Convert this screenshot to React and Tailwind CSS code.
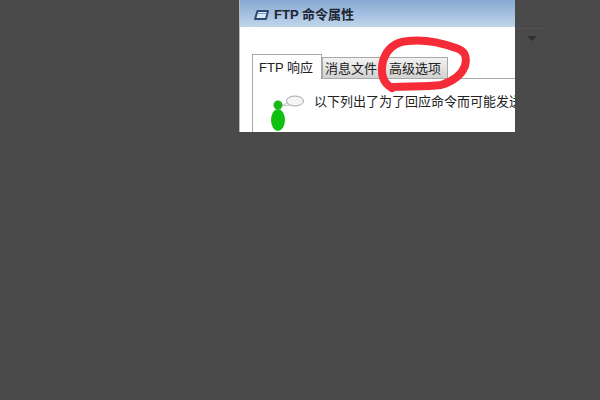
import React from "react";

const cjk = "font-['Liberation_Sans','Noto_Sans_CJK_SC',sans-serif]";

const Tab = ({ label, active, className = "" }) => (
  <div
    className={`flex items-center justify-center border border-[#a8a8a8] pr-[2px] text-[13px] leading-none text-[#222] ${
      active
        ? "z-10 -mb-px h-[25px] border-b-0 bg-white"
        : "h-[21px] border-b-0 bg-gradient-to-b from-[#f2f2f2] to-[#d2d2d2]"
    } ${className}`}
  >
    {label}
  </div>
);

const App = () => {
  return (
    <div className={`relative h-[400px] w-[600px] overflow-hidden bg-[#4a4a4a] ${cjk}`}>
      <div className="ml-[239px] flex h-[132px] w-[276px] flex-col overflow-hidden border-l border-[#b8b8b8] bg-white">
        {/* title bar */}
        <div className="flex h-[27px] shrink-0 items-center gap-[4px] bg-gradient-to-b from-[#86a8d2] to-[#c2d6ec] pl-[13px] pt-[2px]">
          <svg width="17" height="12" viewBox="0 0 17 12">
            <path d="M4.5 2h10.5l-2 8H2z" fill="#dbe8f5" stroke="#2a4a75" strokeWidth="2" strokeLinejoin="round" />
            <path d="M5 4.5h8" stroke="#7f9fc8" strokeWidth="1" />
          </svg>
          <span className="text-[13px] font-bold text-[#1c2530]">FTP 命令属性</span>
        </div>

        {/* tab strip */}
        <div className="flex h-[51px] shrink-0 items-end pl-[12px]">
          <Tab label="FTP 响应" active className="w-[70px]" />
          <Tab label="消息文件" className="w-[60px]" />
          <Tab label="高级选项" className="ml-[2px] w-[64px]" />
        </div>

        {/* tab body */}
        <div className="ml-[12px] flex flex-1 gap-[13px] border-l border-t border-[#a8a8a8] pl-[18px] pt-[16px]">
          <svg width="30" height="36" viewBox="0 0 30 36" className="shrink-0 overflow-visible">
            <ellipse cx="24" cy="6" rx="8.5" ry="5" fill="#f4f4f4" stroke="#a8a8a8" />
            <path d="M16 8l-6 3 9-1z" fill="#f4f4f4" stroke="#a8a8a8" strokeWidth="0.6" />
            <circle cx="7" cy="10" r="4.5" fill="#18b818" />
            <ellipse cx="7" cy="25" rx="7" ry="11" fill="#10c010" />
          </svg>
          <span className="-mt-px whitespace-nowrap text-[13px] leading-[16px] text-[#222]">以下列出了为了回应命令而可能发送</span>
        </div>
      </div>

      {/* hand drawn circle */}
      <svg width="110" height="70" viewBox="0 0 110 70" className="absolute left-[370px] top-[30px]">
        <path
          d="M22 58C13 53 10 44 13 31C17 18 26 12 38 11C54 9 72 13 86 18C96 21 97 28 95 36C91 46 81 52 71 55C56 57 38 56 22 57"
          fill="none"
          stroke="#f52b38"
          strokeWidth="8"
          strokeLinecap="round"
          strokeLinejoin="round"
        />
      </svg>

      {/* faint rule and dropdown arrow from the page behind */}
      <div className="absolute left-[515px] top-[28px] h-px w-[30px] bg-[#525252]" />
      <div className="absolute left-[527px] top-[36px] h-0 w-0 border-x-[5px] border-t-[5px] border-x-transparent border-t-[#2f2f2f]" />
    </div>
  );
};

export default App;
